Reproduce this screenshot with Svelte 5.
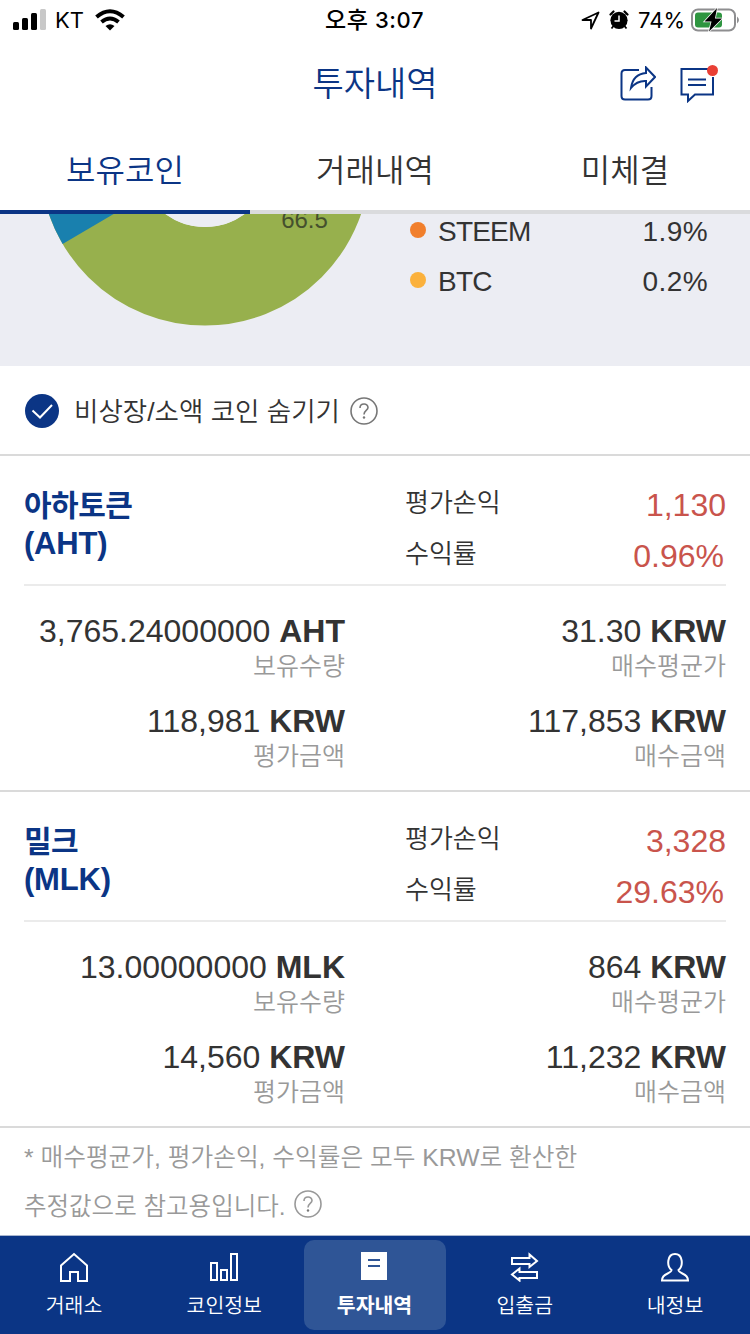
<script>
  let tab = $state('보유코인')
  let menu = $state('투자내역')
  let hideSmall = $state(true)

  const tabs = ['보유코인', '거래내역', '미체결']
  const legend = [
    { name: 'STEEM', share: '1.9%', color: '#f17f2c' },
    { name: 'BTC', share: '0.2%', color: '#fbb13c' },
  ]
  const coins = [
    { name: '아하토큰', code: 'AHT', profit: '1,130', rate: '0.96%', qty: '3,765.24000000', avg: '31.30', value: '118,981', cost: '117,853' },
    { name: '밀크', code: 'MLK', profit: '3,328', rate: '29.63%', qty: '13.00000000', avg: '864', value: '14,560', cost: '11,232' },
  ]
  const menus = [
    { label: '거래소', d: 'M2 29V13.5L15 2L28 13.5V29H19V20H11V29Z' },
    { label: '코인정보', d: 'M2 11H8V28H2ZM12 18H18V28H12ZM22 2H28V28H22Z' },
    { label: '투자내역', d: '' },
    { label: '입출금', d: 'M2 6H19.500V2.500L27 9L19.500 15V12H2ZM27 20H9.500V16.500L2 22.500L9.500 28.500V26H27Z' },
    { label: '내정보', d: 'M11.500 18C6.500 14 7 2 15 2S23.500 14 18.500 18C19 22.500 28 20.500 28 28.500H2C2 20.500 11 22.500 11.500 18Z' },
  ]
</script>

{#snippet help()}
  <svg class="help" viewBox="0 0 28 28" width="28" height="28">
    <circle cx="14" cy="14" r="13" />
    <path d="M10 11C10 5.700 18 5.700 18 10.500C18 13.500 14 13.500 14 17.500" />
    <circle class="dot" cx="14" cy="20.500" r="1.200" />
  </svg>
{/snippet}

{#snippet amount(num, unit, label)}
  <div class="amount">
    <div class="num">{num} <b>{unit}</b></div>
    <div class="cap">{label}</div>
  </div>
{/snippet}

<div class="app">
  <div class="status">
    <div class="side">
      <svg viewBox="0 0 34 22" width="34" height="22">
        <rect x="0" y="13" width="6" height="8" rx="1.500" />
        <rect x="9" y="9" width="6" height="12" rx="1.500" />
        <rect x="18" y="4" width="6" height="17" rx="1.500" />
        <rect x="27" y="0" width="6" height="21" rx="1.500" fill="#c8c8c8" />
      </svg>
      <span class="carrier">KT</span>
      <svg viewBox="0 0 30 22" width="30" height="22">
        <g fill="none" stroke="#000" stroke-width="4">
          <path d="M1.500 8Q15 -3.500 28.500 8" />
          <path d="M6.500 13Q15 6 23.500 13" />
        </g>
        <path d="M10.500 17Q15 13.500 19.500 17L15 21.500Z" />
      </svg>
    </div>
    <div class="clock"><span>오후</span> 3:07</div>
    <div class="side right">
      <svg viewBox="0 0 19 19" width="19" height="19">
        <path d="M1.500 9L17.500 1.500L10 17.500V9Z" fill="none" stroke="#000" stroke-width="1.800" stroke-linejoin="round" />
      </svg>
      <svg class="alarm" viewBox="0 0 20 20" width="20" height="20">
        <circle cx="10" cy="10.300" r="8.600" />
        <path d="M1.500 4.500L4.500 1.500M15.500 1.500L18.500 4.500" stroke="#000" stroke-width="2.200" stroke-linecap="round" />
        <path d="M4.500 16L2.500 18.500M15.500 16L17.500 18.500" stroke="#000" stroke-width="1.800" />
        <path d="M10 5.500V11H5.500" fill="none" stroke="#fff" stroke-width="1.500" />
      </svg>
      <span class="pct">74%</span>
      <svg viewBox="0 0 49 24" width="49" height="24">
        <rect x="1" y="1.500" width="43" height="21" rx="6" fill="none" stroke="#8e8e90" stroke-width="2" />
        <path d="M46 8.500Q50 12 46 15.500Z" fill="#8e8e90" />
        <rect x="4" y="4.500" width="27" height="15" rx="3" fill="#2e9540" />
        <path d="M26 0L13.500 13.500H20.500L18 23.500L31 10.500H24Z" stroke="#fff" stroke-width="1.500" paint-order="stroke" />
      </svg>
    </div>
  </div>

  <header>
    <h1>투자내역</h1>
    <div class="actions">
      <svg viewBox="0 0 36 36" width="36" height="36">
        <path d="M19 4H5Q1.500 4 1.500 7.500V30Q1.500 33.500 5 33.500H28Q31.500 33.500 31.500 30V21" />
        <path d="M11 22Q13 8 26 7V1.500L35 11L26 20.500V15Q17 14.500 11 22Z" />
      </svg>
      <svg viewBox="0 0 40 38" width="40" height="38">
        <path d="M28 4H1.500V29.500H8V36L15 29.500H33V12M8 14.500H26M8 20H26" />
        <circle class="new" cx="32.500" cy="5.500" r="5.500" />
      </svg>
    </div>
  </header>

  <nav class="tabs">
    {#each tabs as t}
      <button type="button" class:on={tab === t} onclick={() => (tab = t)}>{t}</button>
    {/each}
  </nav>

  <section class="chart">
    <svg viewBox="0 214 410 152" width="410" height="152">
      <circle cx="205" cy="160.500" r="115.750" fill="none" stroke="#97b04d" stroke-width="98.500" />
      <path d="M205 160.500L62.600 243.900A165 165 0 0 1 40 160.500Z" fill="#1980ae" />
      <circle cx="205" cy="160.500" r="66.500" fill="#ecedf3" />
      <text x="304.500" y="227.500">66.5</text>
    </svg>
    <ul>
      {#each legend as l}
        <li><i style="background: {l.color}"></i><span>{l.name}</span><em>{l.share}</em></li>
      {/each}
    </ul>
  </section>

  <div class="filter">
    <button type="button" class="check" aria-label="숨기기" aria-pressed={hideSmall} onclick={() => (hideSmall = !hideSmall)}>
      <svg viewBox="0 0 34 34" width="34" height="34">
        <circle cx="17" cy="17" r="17" fill={hideSmall ? '#0b3585' : '#ccc'} />
        <path d="M7.500 16.500L15 23.500L27 11" fill="none" stroke="#fff" stroke-width="2" />
      </svg>
    </button>
    <span>비상장/소액 코인 숨기기</span>
    {@render help()}
  </div>

  {#each coins as c}
    <article>
      <div class="top">
        <h2><span>{c.name}</span><br />({c.code})</h2>
        <dl>
          <div><dt>평가손익</dt><dd>{c.profit}</dd></div>
          <div><dt>수익률</dt><dd class="rate">{c.rate}</dd></div>
        </dl>
      </div>
      <div class="grid">
        {@render amount(c.qty, c.code, '보유수량')}
        {@render amount(c.avg, 'KRW', '매수평균가')}
        {@render amount(c.value, 'KRW', '평가금액')}
        {@render amount(c.cost, 'KRW', '매수금액')}
      </div>
    </article>
  {/each}

  <div class="note">
    <div>* 매수평균가, 평가손익, 수익률은 모두 KRW로 환산한</div>
    <div class="line2"><span>추정값으로 참고용입니다.</span> {@render help()}</div>
  </div>

  <nav class="bottom">
    {#each menus as m}
      <button type="button" class:on={menu === m.label} onclick={() => (menu = m.label)}>
        <svg viewBox="0 0 30 30" width="30" height="30">
          {#if m.d}
            <path d={m.d} />
          {:else}
            <rect x="1" y="0" width="26" height="28" fill="#fff" />
            <path class="rows" d="M8 8H20M8 14H20" />
          {/if}
        </svg>
        <span>{m.label}</span>
      </button>
    {/each}
  </nav>
</div>

<style>
  :global(body) { background: #fff; }
  .app { width: 750px; height: 1334px; overflow: hidden; display: flex; flex-direction: column; color: #333; font-family: "Liberation Sans", "Noto Sans CJK KR", sans-serif; font-weight: 350; }
  svg { display: block; flex: none; }
  button { border: 0; padding: 0; background: none; font: inherit; color: inherit; cursor: pointer; }

  .status { height: 40px; display: grid; grid-template-columns: 1fr auto 1fr; align-items: center; padding: 0 10px 0 13px; color: #000; font: 400 22px/40px Inter, "Noto Sans CJK KR", sans-serif; }
  .side { display: flex; align-items: center; }
  .side.right { justify-content: flex-end; }
  .carrier { margin: 0 11px 0 8px; }
  .clock { margin-right: 4px; font-weight: 500; letter-spacing: .6px; }
  .clock span { font-size: 23px; }
  .alarm { margin-left: 9px; }
  .pct { margin: 0 6px 0 9px; font-size: 22px; }

  header { height: 88px; display: grid; grid-template-columns: 1fr auto 1fr; align-items: center; padding-right: 30px; }
  h1 { grid-column: 2; margin: 0 0 1px 30px; font-size: 34px; line-height: 50px; font-weight: 350; color: #0b3585; }
  .actions { display: flex; justify-content: flex-end; align-items: center; gap: 24px; }
  .actions svg { fill: none; stroke: #0b3585; stroke-width: 2; }
  .actions .new { fill: #e93f35; stroke: none; }

  .tabs { display: grid; grid-template-columns: repeat(3, 1fr); height: 86px; }
  .tabs button { font-size: 32px; line-height: 78px; padding-top: 4px; border-bottom: 4px solid #dadbdd; }
  .tabs .on { color: #0b3585; border-color: #0b3585; }

  .chart { display: flex; height: 152px; background: #ecedf3; overflow: hidden; }
  .chart text { font-size: 24px; fill: #45502d; text-anchor: middle; }
  ul { list-style: none; margin: 0; padding: 0 42px 0 0; flex: 1; }
  li { display: flex; align-items: center; height: 50px; font-size: 28px; margin-top: -9px; }
  li + li { margin-top: 0; }
  li i { width: 16px; height: 16px; border-radius: 50%; margin-right: 12px; }
  li span { padding-top: 3px; letter-spacing: -.8px; }
  li em { margin-left: auto; padding-top: 3px; font-style: normal; letter-spacing: .4px; }

  .filter { display: flex; align-items: center; height: 88px; padding: 2px 0 0 25px; box-sizing: content-box; height: 86px; border-bottom: 2px solid #dadada; font-size: 26.500px; line-height: 40px; }
  .filter span { padding-top: 2px; }
  .filter .check { margin-right: 15px; }
  .help { fill: none; stroke: #777; stroke-width: 1.6; margin-left: 10px; }
  .help .dot { fill: #777; stroke: none; }

  article { height: 334px; border-bottom: 2px solid #dadada; padding: 0 24px; }
  .top { display: flex; height: 128px; border-bottom: 2px solid #ebebeb; }
  h2 { width: 381px; margin: 31px 0 0; font-size: 31px; line-height: 38px; font-weight: 700; color: #0b3585; letter-spacing: -.2px; }
  h2 span { font-size: 30px; font-weight: 600; letter-spacing: -.5px; }
  dl { flex: 1; margin: 22px 0 0; }
  dl div { display: flex; justify-content: space-between; height: 51px; line-height: 51px; }
  dt { font-size: 26px; }
  dd { margin: 2px 0 0; font-size: 32px; color: #c9544c; }
  .rate { padding-right: 2px; }

  .grid { display: grid; grid-template-columns: 321px 381px; row-gap: 10px; padding-top: 25px; text-align: right; }
  .amount { height: 80px; }
  .num { font-size: 32px; line-height: 40px; }
  .num b { font-weight: 700; }
  .cap { font-size: 25px; line-height: 31px; color: #999; }

  .note { height: 107px; padding: 1px 0 0 24px; font-size: 24.700px; line-height: 58px; color: #999; box-sizing: border-box; }
  .line2 { display: flex; align-items: center; line-height: 40px; font-size: 24.500px; }
  .note :global(.help) { stroke: #999; margin: -7px 0 0 8px; }

  .bottom { display: grid; grid-template-columns: repeat(5, 142px); justify-content: space-between; height: 99px; padding: 4px 4px 4px 3px; box-sizing: border-box; border-top: 1px solid #a9b6cf; background: #0b3585; color: #fff; }
  .bottom button { display: flex; flex-direction: column; align-items: center; padding-top: 12px; border-radius: 10px; font-size: 20.500px; line-height: 30px; }
  .bottom .on { background: #2f5596; font-weight: 700; }
  .bottom svg { fill: none; stroke: #fff; stroke-width: 2; margin-bottom: 9px; }
  .bottom rect { stroke: none; }
  .bottom .rows { stroke: #2f5596; }
</style>
